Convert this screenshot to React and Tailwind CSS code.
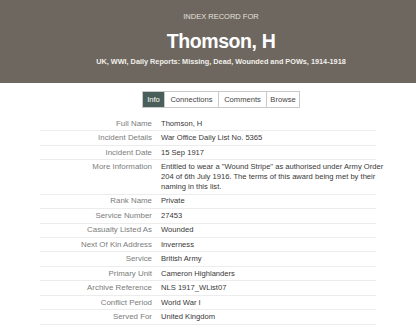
import React from 'react';

const rows = [
  ['Full Name', ['Thomson, H']],
  ['Incident Details', ['War Office Daily List No. 5365']],
  ['Incident Date', ['15 Sep 1917']],
  [
    'More Information',
    [
      'Entitled to wear a "Wound Stripe" as authorised under Army Order',
      '204 of 6th July 1916. The terms of this award being met by their',
      'naming in this list.',
    ],
  ],
  ['Rank Name', ['Private']],
  ['Service Number', ['27453']],
  ['Casualty Listed As', ['Wounded']],
  ['Next Of Kin Address', ['Inverness']],
  ['Service', ['British Army']],
  ['Primary Unit', ['Cameron Highlanders']],
  ['Archive Reference', ['NLS 1917_WList07']],
  ['Conflict Period', ['World War I']],
  ['Served For', ['United Kingdom']],
];

const tabs = [
  { name: 'Info', w: 'w-[21px]' },
  { name: 'Connections', w: 'w-[54px]' },
  { name: 'Comments', w: 'w-[48px]' },
  { name: 'Browse', w: 'w-[33px]' },
];

export default function App() {
  return (
    <div className="w-[416px] h-[328px] overflow-hidden bg-white font-['Liberation_Sans',Arial,sans-serif]">
      {/* Header */}
      <div className="h-[83px] bg-[#6e675f] pl-[26px] flex flex-col items-center text-center">
        <div className="pt-[11px] text-[7.5px] leading-[12px] text-[#e4e0db]">
          INDEX RECORD FOR
        </div>
        <div className="mt-[6px] text-[19.5px] leading-[24px] font-bold text-white tracking-[-0.4px]">
          Thomson, H
        </div>
        <div className="mt-[3px] text-[7.3px] leading-[12px] font-bold text-[#f2efeb]">
          UK, WWI, Daily Reports: Missing, Dead, Wounded and POWs, 1914-1918
        </div>
      </div>

      {/* Tabs */}
      <div className="flex justify-center pl-[26px] mt-[8px]">
        <div className="flex border border-[#c9c9c9] text-[7.6px] leading-[15px]">
          {tabs.map((t, i) => (
            <div
              key={t.name}
              className={`${t.w} text-center ${i > 0 ? 'border-l border-[#c9c9c9]' : ''} ${
                i === 0 ? 'bg-[#4a5e5a] text-white' : 'text-[#444]'
              }`}
            >
              {t.name}
            </div>
          ))}
        </div>
      </div>

      {/* Record table */}
      <div className="mx-[40px] mt-[9px]">
        {rows.map(([label, lines]) => (
          <div key={label} className="flex border-b border-[#ececec] py-[1.85px] leading-[9.8px]">
            <div className="w-[112px] shrink-0 text-right text-[7.9px] text-[#7b7b7b]">{label}</div>
            <div className="pl-[9px] text-[7.6px] text-[#383838]">
              {lines.map((l) => (
                <div key={l} className="whitespace-nowrap">{l}</div>
              ))}
            </div>
          </div>
        ))}
      </div>
    </div>
  );
}
